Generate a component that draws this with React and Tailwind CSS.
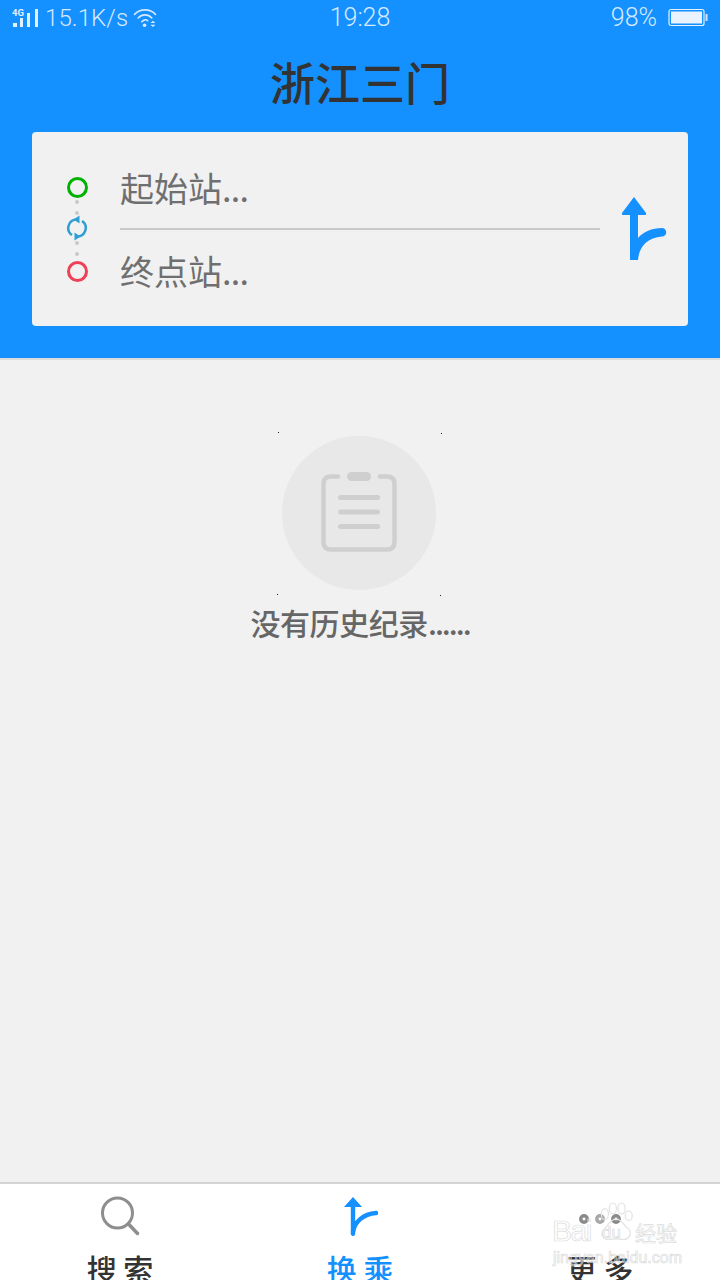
import React from "react";

const cjk = "font-['Noto_Sans_CJK_SC','Noto_Sans',sans-serif]";
const latin = "font-['Roboto','Noto_Sans',sans-serif]";

function Signal() {
  return (
    <svg width="26" height="24" viewBox="0 0 26 24" className="block">
      <text x="0" y="10" fontSize="9.5" fontWeight="700" fill="#e3f0ff" fontFamily="Roboto, sans-serif">4G</text>
      <rect x="1" y="17" width="4" height="4" fill="#e3f0ff" />
      <rect x="8" y="12" width="3" height="9" fill="#e3f0ff" />
      <rect x="15" y="7" width="3" height="14" fill="#e3f0ff" />
      <rect x="23" y="3" width="3" height="18" fill="#e3f0ff" />
    </svg>
  );
}

function Wifi() {
  return (
    <svg width="24" height="20" viewBox="0 0 26 22" fill="none" stroke="#d6e9ff" strokeWidth="1.8" strokeLinecap="round" className="block">
      <path d="M1.500 7 C7.500 0.500 18.500 0.500 24.500 7" />
      <path d="M5.500 11 C9.500 6.500 16.500 6.500 20.500 11" />
      <path d="M9.500 15 C11.500 12.500 14.500 12.500 16 14" />
      <circle cx="12.500" cy="19" r="2" fill="#d6e9ff" stroke="none" />
      <path d="M19 16.500 h5.500 l-2.750 -2.500 z M19 18.500 h5.500 l-2.750 2.500 z" fill="#d6e9ff" stroke="none" />
    </svg>
  );
}

function Battery() {
  return (
    <svg width="40" height="20" viewBox="0 0 40 20" className="block">
      <rect x="1" y="1.500" width="35" height="16" rx="2" fill="none" stroke="#e6f2ff" strokeWidth="1.200" />
      <rect x="3" y="3.500" width="31" height="12" fill="#e9f3ff" />
      <rect x="37.500" y="6" width="2" height="7" fill="#cfe5ff" />
    </svg>
  );
}

function RouteIconLarge() {
  return (
    <svg width="46" height="64" viewBox="0 0 46 64" className="block">
      <path
        d="M13 0 L25 16 Q25.500 18 24 18 L17 18 L17 41 C22 35 31 31 41 31 A4.250 4.250 0 0 1 41 39.500 C26 40.500 18 50 17 63 L9 63 L9 18 L2 18 Q0.500 18 1 16 Z"
        fill="#1590ff"
      />
    </svg>
  );
}

function RouteIconSmall() {
  return (
    <svg width="34" height="42" viewBox="0 0 34 42" className="block">
      <path d="M9 2 L18 12 L11.200 12 L11.200 39.500 Q9 42.500 6.800 39.500 L6.800 12 L0 12 Z" fill="#1590ff" />
      <path d="M9 37 C10.500 27 19 19 32 18" fill="none" stroke="#1590ff" strokeWidth="4.500" strokeLinecap="round" />
    </svg>
  );
}

function SwapIcon() {
  return (
    <svg width="22" height="26" viewBox="0 0 22 26" fill="none" className="block mr-[2px]">
      <path d="M11 4.500 A8.500 8.500 0 0 0 6 20" stroke="#2d9fd4" strokeWidth="2.500" />
      <path d="M11 21.500 A8.500 8.500 0 0 0 16 6" stroke="#2d9fd4" strokeWidth="2.500" />
      <path d="M7.500 4.500 L13.500 0.500 L13.500 8.500 Z" fill="#2d9fd4" />
      <path d="M14.500 21.500 L8.500 17.500 L8.500 25.500 Z" fill="#2d9fd4" />
    </svg>
  );
}

function Dot() {
  return <div className="w-1 h-1 rounded-full bg-[#c9c9c9]" />;
}

function Clipboard() {
  return (
    <svg width="76" height="82" viewBox="0 0 76 82" fill="none" className="block">
      <path d="M17 4.500 H10 Q2.500 4.500 2.500 12 V70 Q2.500 77.500 10 77.500 H66 Q73.500 77.500 73.500 70 V12 Q73.500 4.500 66 4.500 H59" stroke="#cfcfcf" strokeWidth="4.500" strokeLinecap="round" />
      <rect x="26" y="0" width="24" height="9" rx="4.500" fill="#cfcfcf" />
      <rect x="17" y="23" width="42" height="5" rx="2.500" fill="#cfcfcf" />
      <rect x="17" y="37.500" width="42" height="5" rx="2.500" fill="#cfcfcf" />
      <rect x="17" y="52" width="42" height="5" rx="2.500" fill="#cfcfcf" />
    </svg>
  );
}

function Speck({ className }) {
  return <div className={`absolute w-px h-px bg-[#222] ${className}`} />;
}

function Tab({ icon, label, color }) {
  return (
    <div className="flex-1 flex flex-col items-center min-w-0">
      <div className="h-[42px] shrink-0 flex items-center justify-center">{icon}</div>
      <div className={`${cjk} text-[30px] leading-[40px] shrink-0 mt-[11px] font-medium whitespace-pre ${color}`}>{label}</div>
    </div>
  );
}

export default function App() {
  return (
    <div className={`relative w-[720px] h-[1280px] overflow-hidden flex flex-col bg-[#f1f1f1] ${cjk}`}>
      <header className="h-[360px] shrink-0 bg-[#1590ff] border-b-2 border-[#dcdcdc] flex flex-col">
        <div className={`h-9 shrink-0 grid grid-cols-3 items-center px-3 ${latin} font-light text-[25px] leading-9 text-[#d6e9ff]`}>
          <div className="flex items-center">
            <Signal />
            <span className="ml-[7px] text-[24px] tracking-[0.1px]">15.1K/s</span>
            <span className="ml-[5px]"><Wifi /></span>
          </div>
          <div className="text-center">19:28</div>
          <div className="flex items-center justify-end gap-[11px]">
            <span>98%</span>
            <Battery />
          </div>
        </div>
        <h1 className="text-center text-[45px] leading-[60px] mt-4 font-medium text-[#333]">浙江三门</h1>
        <div className="mx-8 mt-5 h-[194px] rounded bg-[#f1f1f1] flex items-center">
          <div className="w-[88px] shrink-0 flex flex-col items-center pl-[3px]">
            <div className="w-[21px] h-[21px] rounded-full border-[3px] border-[#00b200]" />
            <div className="mt-[2px] mr-[2px] flex flex-col items-center gap-[7px]"><Dot /><Dot /></div>
            <SwapIcon />
            <div className="mr-[2px] flex flex-col items-center gap-[7px]"><Dot /><Dot /></div>
            <div className="mt-[5px] w-[21px] h-[21px] rounded-full border-[3px] border-[#ef4056]" />
          </div>
          <div className="w-[480px] h-full shrink-0 flex flex-col text-[34px] text-[#6f6f6f]">
            <div className="h-[98px] leading-[48px] pt-8 border-b-2 border-[#c9c9c9]">起始站<span className="tracking-[-0.7px]">...</span></div>
            <div className="leading-[48px] pt-[17px]">终点站<span className="tracking-[-0.7px]">...</span></div>
          </div>
          <div className="ml-[21px]"><RouteIconLarge /></div>
        </div>
      </header>

      <main className="flex-1 min-h-0 flex flex-col items-center pt-[76px]">
        <div className="relative mr-[2px] w-[154px] h-[154px] rounded-full bg-[#e8e8e8] flex items-center justify-center">
          <Clipboard />
          <Speck className="top-[-4px] left-[-4px]" />
          <Speck className="top-[-3px] right-[-6px]" />
          <Speck className="bottom-[-5px] left-[-5px]" />
          <Speck className="bottom-[-6px] right-[-5px]" />
        </div>
        <div className="mt-[11px] text-[30px] leading-[42px] font-medium text-[#666] tracking-[-0.4px] whitespace-nowrap">
          没有历史纪录<span className="tracking-[-2px]">......</span>
        </div>
      </main>

      <nav className="h-[98px] shrink-0 bg-white border-t-2 border-[#d4d4d4] flex overflow-hidden pt-[11px]">
        <Tab
          label="搜 索"
          color="text-[#333]"
          icon={
            <svg width="42" height="42" viewBox="0 0 42 42" fill="none" stroke="#8e8e8e" strokeWidth="3" strokeLinecap="round">
              <circle cx="18.500" cy="18" r="15" />
              <path d="M29.500 29 L38.500 38.500" strokeWidth="3.500" />
            </svg>
          }
        />
        <Tab label="换 乘" color="text-[#1590ff]" icon={<span className="ml-[2px]"><RouteIconSmall /></span>} />
        <Tab
          label="更 多"
          color="text-[#333]"
          icon={
            <svg width="46" height="14" viewBox="0 0 46 14" fill="none" stroke="#8a8a8a" strokeWidth="3.500" className="block ml-1 mt-[6px]">
              <circle cx="5" cy="7" r="3.200" />
              <circle cx="21" cy="7" r="3.200" stroke="#a8a8a8" />
              <circle cx="37" cy="7" r="3.200" />
            </svg>
          }
        />
      </nav>

      <div className="absolute left-[552px] top-[1202px] w-[130px] h-[62px] pointer-events-none font-['Liberation_Sans',sans-serif] text-transparent [-webkit-text-stroke:0.7px_#dcdcdc]">
        <svg width="38" height="40" viewBox="0 0 48 50" fill="none" stroke="#e2e2e2" strokeWidth="1.500" className="absolute left-[45px] top-0">
          <ellipse cx="10" cy="15" rx="4.500" ry="7" />
          <ellipse cx="20" cy="8" rx="4.500" ry="7" />
          <ellipse cx="31" cy="8" rx="4.500" ry="7" />
          <ellipse cx="40" cy="17" rx="4.500" ry="6" />
          <path d="M24 21 C16 22 14 30 9 34 C3 40 8 48 16 47 C21 46 27 46 32 47 C40 48 45 40 40 34 C34 30 32 22 24 21 Z" />
        </svg>
        <div className="absolute left-0 top-[11px] text-[30px] leading-9 tracking-[-1.5px]">Bai</div>
        <div className="absolute left-[50px] top-[23px] text-[17px] leading-4">du</div>
        <div className={`absolute left-[83px] top-5 text-[21px] leading-[21px] whitespace-nowrap ${cjk}`}>经验</div>
        <div className="absolute left-px top-[47px] text-[16px] leading-[18px] whitespace-nowrap">jingyan.baidu.com</div>
      </div>
    </div>
  );
}
